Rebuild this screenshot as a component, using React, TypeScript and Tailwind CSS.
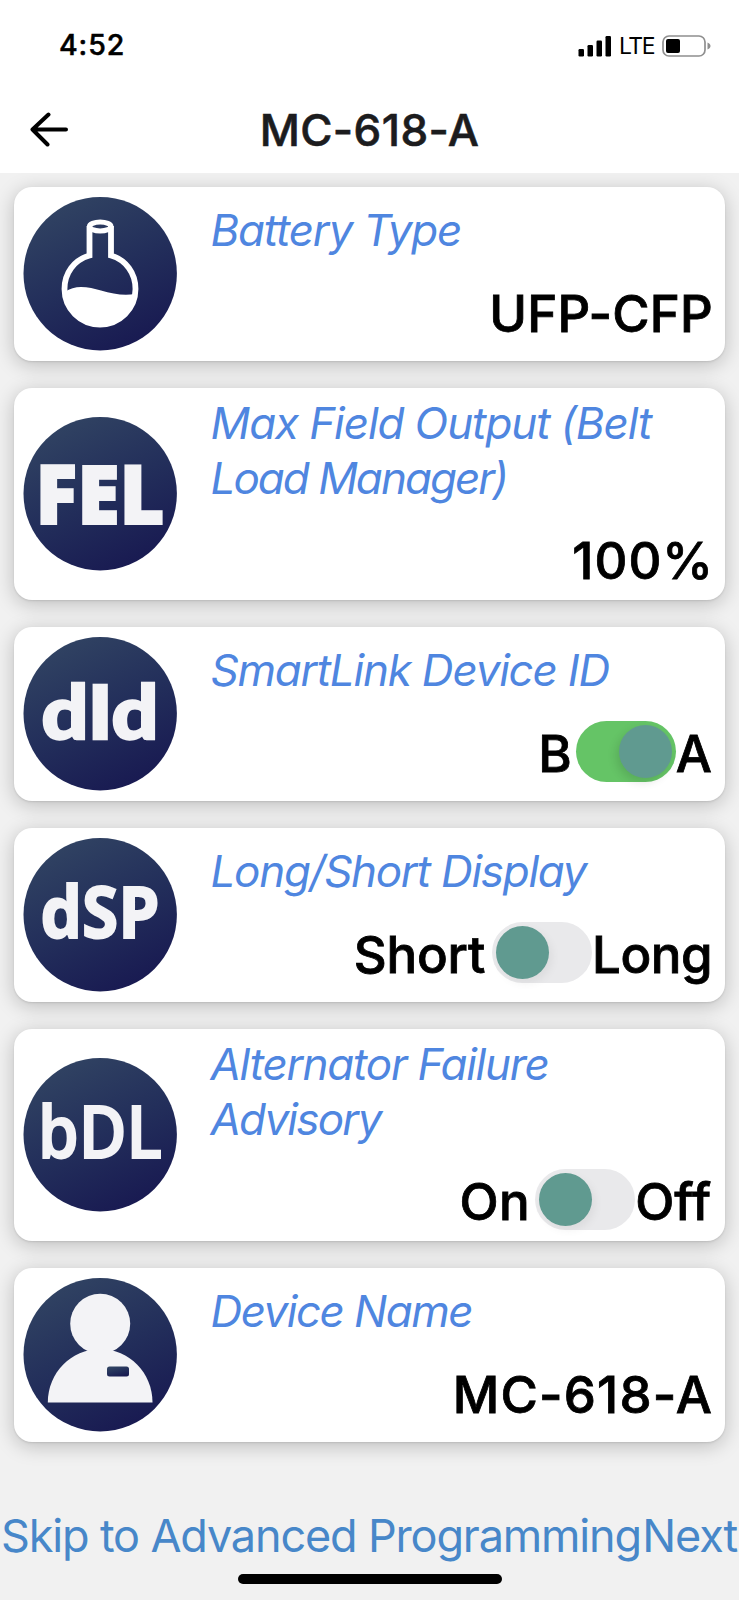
import type { ReactNode } from "react";
import clsx from "clsx";

type BadgeTextProps = {
  children: string;
  x: number;
  y: number;
  length: number;
  className: string;
};

const Badge = ({ id, children }: { id: string; children: ReactNode }) => {
  return (
    <svg viewBox="0 0 154 154" className="size-[154px] shrink-0">
      <defs>
        <linearGradient id={id} x1="0.25" y1="0.05" x2="0.7" y2="0.95">
          <stop offset="0" stopColor="#304262" />
          <stop offset="0.5" stopColor="#232f5b" />
          <stop offset="1" stopColor="#191b52" />
        </linearGradient>
      </defs>
      <circle cx="77.2" cy="76.7" r="76.7" fill={`url(#${id})`} />
      {children}
    </svg>
  );
};

const BadgeText = ({ children, x, y, length, className }: BadgeTextProps) => {
  return (
    <text
      x={x}
      y={y}
      textLength={length}
      lengthAdjust="spacingAndGlyphs"
      className={clsx("fill-[#f3f3f6] stroke-[#f3f3f6]", className)}
    >
      {children}
    </text>
  );
};

const FlaskIcon = () => {
  return (
    <g>
      <path
        d="M66.5 29V58.5C51 63 41.5 76 41.5 92A35.5 35.5 0 0 0 112.5 92C112.5 76 103 63 88 58.5V29"
        fill="none"
        stroke="#fff"
        strokeWidth="5.8"
      />
      <ellipse cx="77.2" cy="29.5" rx="10.8" ry="4.5" fill="none" stroke="#fff" strokeWidth="5" />
      <path d="M42 95C52 87 66 90 78 93.5C90 97 101 99 112 97A35.5 35.5 0 0 1 42 95Z" fill="#fff" />
    </g>
  );
};

const PersonIcon = ({ id }: { id: string }) => {
  return (
    <g>
      <g fill="#f3f3f6">
        <circle cx="77.2" cy="45.7" r="30" />
        <path d="M24.8 124.5C24.8 95 48 71 77.2 71S129.5 95 129.5 124.5Z" />
      </g>
      <rect x="84" y="88.5" width="22" height="10" rx="2.5" fill={`url(#${id})`} />
    </g>
  );
};

const Switch = ({ on }: { on: boolean }) => {
  return (
    <div
      role="switch"
      aria-checked={on}
      className={clsx(
        "mb-[5px] flex h-[61px] w-[100px] shrink-0 items-center rounded-full px-[3.5px]",
        on ? "justify-end bg-[#65c466]" : "justify-start bg-[#e9e9eb]"
      )}
    >
      <div
        className={clsx(
          "size-[53.5px] rounded-full bg-[#609a90]",
          on ? "shadow-[-3px_4px_10px_rgba(0,0,0,0.12)]" : "shadow-[3px_4px_10px_rgba(0,0,0,0.06)]"
        )}
      />
    </div>
  );
};

type CardProps = {
  badge: ReactNode;
  label: ReactNode;
  children: ReactNode;
};

const Card = ({ badge, label, children }: CardProps) => {
  return (
    <div className="flex items-center rounded-[18px] bg-white py-2 pr-3 pl-[9px] shadow-[0_1px_2px_rgba(0,0,0,0.1),0_4px_20px_rgba(0,0,0,0.22)]">
      {badge}
      <div className="ml-[33.5px] flex min-h-[158px] flex-1 flex-col justify-center">
        <div className="text-[44px] leading-[54.5px] text-[#4f86e0] italic">{label}</div>
        <div className="mt-[25px] flex h-[62px] items-center justify-end text-[51px] leading-[62px] font-medium text-black [-webkit-text-stroke:0.8px_black]">
          {children}
        </div>
      </div>
    </div>
  );
};

const StatusBar = () => {
  return (
    <div className="flex h-[91px] items-center justify-between pr-[28px] pl-[59px]">
      <span className="text-[28.5px] font-medium tracking-[0.9px] [-webkit-text-stroke:0.5px_black]">4:52</span>
      <div className="flex items-center">
        <svg viewBox="0 0 34 22" className="mr-[7px] h-[22px] w-[34px]">
          <rect x="0.5" y="14" width="5.5" height="7.5" rx="1.2" />
          <rect x="9.5" y="10" width="5.5" height="11.5" rx="1.2" />
          <rect x="18.5" y="5.5" width="5.5" height="16" rx="1.2" />
          <rect x="27.5" y="1" width="5.5" height="20.5" rx="1.2" />
        </svg>
        <span className="mr-2 text-[23px] leading-6 tracking-[-1.5px]">LTE</span>
        <svg viewBox="0 0 49 22" className="h-[22px] w-[49px]">
          <rect x="1" y="1" width="42" height="20" rx="6" fill="none" stroke="#8f8f8f" strokeWidth="1.7" />
          <rect x="4" y="4" width="14" height="14" rx="2" />
          <path d="M45.5 7.5C49.5 9 49.5 13 45.5 14.5Z" fill="#8f8f8f" />
        </svg>
      </div>
    </div>
  );
};

export default function App() {
  return (
    <div className="flex h-[1600px] w-[739px] flex-col overflow-hidden bg-[#f1f1f1] font-['Inter','Liberation_Sans',sans-serif] text-black">
      <header className="h-[173px] shrink-0 bg-white">
        <StatusBar />
        <div className="flex h-[78px] items-center pl-[29px]">
          <svg
            viewBox="0 0 40 36"
            className="h-9 w-10"
            fill="none"
            stroke="currentColor"
            strokeWidth="4"
            strokeLinecap="round"
            strokeLinejoin="round"
          >
            <path d="M19.5 2.5L3.5 17.5L18.5 32.5M3.5 17.5H37" />
          </svg>
          <h1 className="mr-[69px] flex-1 text-center text-[44px] font-medium tracking-[0.4px] text-[#1c1c1e] [-webkit-text-stroke:0.6px_#1c1c1e]">
            MC-618-A
          </h1>
        </div>
      </header>

      {/* Settings */}
      <main className="flex flex-col gap-[27px] overflow-hidden px-3.5 pt-3.5 pb-10">
        <Card
          badge={<Badge id="battery"><FlaskIcon /></Badge>}
          label={<span className="tracking-[-1.25px]">Battery Type</span>}
        >
          <span className="tracking-[0.2px]">UFP-CFP</span>
        </Card>
        <Card
          badge={
            <Badge id="field">
              <BadgeText x={12.5} y={107} length={129} className="font-['Open_Sans',sans-serif] text-[81px] font-extrabold stroke-2">
                FEL
              </BadgeText>
            </Badge>
          }
          label={
            <>
              <span className="tracking-[-1.1px]">Max Field Output (Belt </span>
              <span className="tracking-[-2px]">Load Manager)</span>
            </>
          }
        >
          <span className="mr-[-1px] tracking-[1px]">100%</span>
        </Card>
        <Card
          badge={
            <Badge id="device">
              <BadgeText x={18.5} y={102} length={117} className="font-['Lato',sans-serif] text-[75px] font-black stroke-[2.5]">
                dId
              </BadgeText>
            </Badge>
          }
          label={<span className="tracking-[-1.22px]">SmartLink Device ID</span>}
        >
          <span className="mr-1">B</span>
          <Switch on />
          <span className="mr-px">A</span>
        </Card>
        <Card
          badge={
            <Badge id="display">
              <BadgeText x={17.5} y={99.5} length={119} className="font-['Open_Sans',sans-serif] text-[71.5px] font-bold stroke-2">
                dSP
              </BadgeText>
            </Badge>
          }
          label={<span className="tracking-[-1.3px]">Long/Short Display</span>}
        >
          <span className="mr-[7px] tracking-[-0.2px]">Short</span>
          <Switch on={false} />
          <span className="mr-px tracking-[-0.5px]">Long</span>
        </Card>
        <Card
          badge={
            <Badge id="alternator">
              <BadgeText x={15} y={99.5} length={124} className="font-['Open_Sans',sans-serif] text-[71.5px] font-semibold stroke-2">
                bDL
              </BadgeText>
            </Badge>
          }
          label={
            <>
              <span className="tracking-[-1.25px]">Alternator Failure </span>
              <br />
              <span className="tracking-[-1.8px]">Advisory</span>
            </>
          }
        >
          <span className="mr-[5px] tracking-[0.5px]">On</span>
          <Switch on={false} />
          <span className="mr-0.5">Off</span>
        </Card>
        <Card
          badge={<Badge id="name"><PersonIcon id="name" /></Badge>}
          label={<span className="tracking-[-1.55px]">Device Name</span>}
        >
          <span className="tracking-[1.15px]">MC-618-A</span>
        </Card>
      </main>

      {/* Footer links */}
      <footer className="flex flex-1 flex-col items-center pt-[27px]">
        <div className="flex w-full justify-between pr-0.5 pl-px text-[45px] leading-[54px] tracking-[-1.15px] whitespace-nowrap text-[#4787c9]">
          <span>Skip to Advanced Programming</span>
          <span>Next</span>
        </div>
        <div className="mt-[11px] h-[10px] w-[264px] rounded-full bg-black" />
      </footer>
    </div>
  );
}
